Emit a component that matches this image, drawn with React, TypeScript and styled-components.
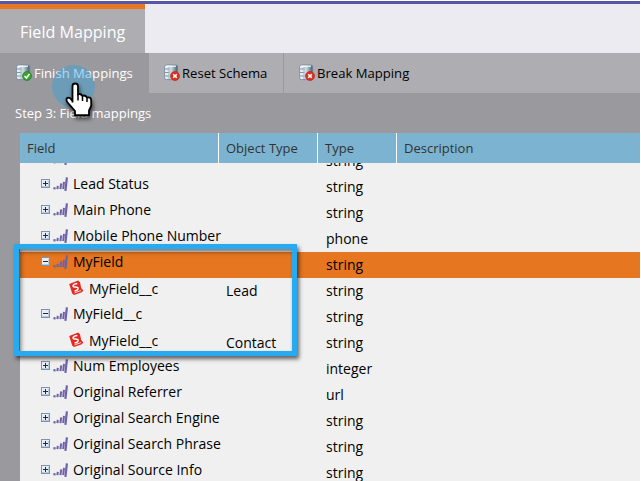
import React from "react";
import styled, { createGlobalStyle } from "styled-components";

const Global = createGlobalStyle`
  * { box-sizing: border-box; }
  body { margin: 0; background: #fff; font-family: "Open Sans", "Noto Sans", sans-serif; }
`;

const Page = styled.div`
  position: relative;
  width: 640px;
  height: 481px;
  overflow: hidden;
  display: flex;
  flex-direction: column;
  background: #9a999d;
`;

const Header = styled.header`
  display: flex;
  flex: none;
  height: 53px;
  border-top: 1px solid #fff;
  background: linear-gradient(#5856a6 3px, #ecebf1 3px);
  padding-top: 3px;
`;

const Tab = styled.div`
  width: 145px;
  height: 49px;
  border-top: 5px solid #e87722;
  background: #aeadb2;
  color: #fff;
  padding-left: 20px;
  font-size: 16.1px;
  line-height: 46px;
  white-space: nowrap;
`;

const Toolbar = styled.nav`
  display: flex;
  flex: none;
  height: 40px;
  background: #aeadb2;
`;

const ToolButton = styled.div<{ $width: number; $active?: boolean }>`
  display: flex;
  align-items: center;
  gap: 2px;
  width: ${(p) => p.$width}px;
  padding: 0 0 0 ${(p) => (p.$active ? 16 : 15)}px;
  color: ${(p) => (p.$active ? "#fff" : "#000")};
  background: ${(p) => (p.$active ? "#9a999d" : "transparent")};
  border-right: ${(p) => (p.$active ? "0" : "1px solid #99989c")};
  font-size: 13.1px;
  line-height: 42px;
  white-space: nowrap;
  &:last-child { border-right: 0; }
`;

const Step = styled.div`
  flex: none;
  height: 40px;
  padding-left: 15px;
  color: #fff;
  font-size: 13px;
  line-height: 41px;
`;

const Table = styled.section`
  flex: 1;
  min-height: 0;
  margin-left: 20px;
  display: flex;
  flex-direction: column;
  background: #f0f0f0;
`;

const columns = "198px 99px 79px 1fr";

const HeadRow = styled.div`
  display: grid;
  grid-template-columns: ${columns};
  flex: none;
  height: 30px;
  background: #7bb3d0;
`;

const HeadCell = styled.div`
  padding-left: 7px;
  font-size: 13px;
  line-height: 31px;
  color: #333;
  border-left: 1px solid #fff;
  &:first-child { border-left: 0; }
`;

const Body = styled.div`
  flex: 1;
  min-height: 0;
  overflow: hidden;
`;

const Rows = styled.div`
  margin-top: -15px;
`;

const Row = styled.div<{ $selected?: boolean }>`
  display: grid;
  grid-template-columns: ${columns};
  height: 26px;
  background: ${(p) => (p.$selected ? "#e6761f" : "transparent")};
  font-size: 14px;
  color: #000;
`;

const FieldCell = styled.div<{ $child?: boolean }>`
  display: flex;
  align-items: flex-start;
  padding-left: ${(p) => (p.$child ? 49 : 21)}px;
  line-height: ${(p) => (p.$child ? 22 : 20)}px;
  white-space: nowrap;
`;

const Label = styled.span`
  margin-left: 5px;
`;

const Cell = styled.div`
  padding-left: 8px;
  line-height: 26px;
`;

const TypeCell = styled(Cell)`
  padding-left: 9px;
`;

const Highlight = styled.div`
  position: absolute;
  left: 14px;
  top: 244px;
  width: 283px;
  height: 112px;
  border: 5px solid #27aaf0;
  box-shadow: 2px 3px 4px rgba(0, 0, 0, 0.6), inset 2px 3px 4px rgba(0, 0, 0, 0.5);
`;

const Halo = styled.div`
  position: absolute;
  left: 52px;
  top: 65px;
  width: 43px;
  height: 43px;
  border-radius: 50%;
  background: rgba(40, 160, 225, 0.4);
`;

const Pointer = styled.svg`
  position: absolute;
  left: 60px;
  top: 78px;
  overflow: visible;
  filter: drop-shadow(1px 3px 2px rgba(0, 0, 0, 0.6));
`;

const BoxIcon = styled.svg`
  flex: none;
  margin-top: 5px;
`;

const BarsIcon = styled.svg`
  flex: none;
  margin: 2px 0 0 3px;
`;

const BadgeIcon = styled.svg`
  flex: none;
  margin-top: 2px;
`;

function Expander({ open }: { open?: boolean }) {
  return (
    <BoxIcon width="9" height="9" viewBox="0 0 9 9" shapeRendering="crispEdges">
      <rect x="0.5" y="0.5" width="8" height="8" fill="#e9eef5" stroke="#7894b5" />
      <path d="M1 7.5h7M7.5 2v6" stroke="#bccadb" />
      <path d={open ? "M2 4.5h5" : "M2 4.5h5M4.5 2v5"} stroke="#172c4a" />
    </BoxIcon>
  );
}

function Bars() {
  return (
    <BarsIcon width="15" height="16" viewBox="0 0 15 16">
      <g stroke="#6d61a7" strokeWidth="2">
        <path d="M.4 12.3h2.2" strokeWidth="2.2" />
        <path d="M4.4 13.2l.4-3.4" />
        <path d="M7.4 13.2l.8-5.8" />
        <path d="M10.2 13l.8-7.2" />
        <path d="M12.4 14.8l1.5-13.4" strokeWidth="2.2" />
      </g>
    </BarsIcon>
  );
}

function Badge() {
  return (
    <BadgeIcon width="15" height="16" viewBox="0 0 15 16">
      <path d="M.2 4L9.2.5 11 2.2 12.2 8 14.4 10.4 12.8 12.2 5 15 3.2 13.4z" fill="#e32a20" />
      <path d="M8.3 3.6Q3.6 4.2 4.1 6.3C4.6 8 8.4 5.9 9.1 8Q9.5 10.2 5.6 10.9" fill="none" stroke="#fff" strokeWidth="1.5" />
      <path d="M5.4 13l6.8-2.5" stroke="#f8d5d2" />
    </BadgeIcon>
  );
}

function Database({ ok }: { ok?: boolean }) {
  return (
    <svg width="16" height="18" viewBox="0 0 16 18">
      <defs>
        <linearGradient id="shell">
          <stop offset="0" stopColor="#f4f8fb" />
          <stop offset=".55" stopColor="#c3d0da" />
          <stop offset="1" stopColor="#3f586d" />
        </linearGradient>
      </defs>
      <path d="M.6 2.6Q.8 1 3 1h8.6q2 0 2.1 1.6v11q0 2-2 2H2.6q-2 0-2-2z" fill="url(#shell)" stroke="#6f8495" strokeWidth=".8" />
      <path d="M2 2.2h10" stroke="#f7fcff" strokeWidth="1.2" />
      <path d="M1 5h4.5M1 8.5h4.5M1 12h4.5" stroke="#7f97a9" />
      <path d="M5 3v12" stroke="#a9bbc9" />
      <circle cx="11" cy="12" r="4.5" fill={ok ? "#38a32c" : "#dc301f"} stroke={ok ? "#257e20" : "#b52c20"} strokeWidth=".7" />
      <path d={ok ? "M8.5 12l1.9 2 3.1-4" : "M9.2 10.2l3.6 3.6M12.8 10.2l-3.6 3.6"} fill="none" stroke="#fff" strokeWidth="1.6" />
    </svg>
  );
}

type Item = { label: string; type: string; object?: string; open?: boolean; selected?: boolean };

const items: Item[] = [
  { label: "Lead Source", type: "string" },
  { label: "Lead Status", type: "string" },
  { label: "Main Phone", type: "string" },
  { label: "Mobile Phone Number", type: "phone" },
  { label: "MyField", type: "string", open: true, selected: true },
  { label: "MyField__c", type: "string", object: "Lead" },
  { label: "MyField__c", type: "string", open: true },
  { label: "MyField__c", type: "string", object: "Contact" },
  { label: "Num Employees", type: "integer" },
  { label: "Original Referrer", type: "url" },
  { label: "Original Search Engine", type: "string" },
  { label: "Original Search Phrase", type: "string" },
  { label: "Original Source Info", type: "string" },
];

export default function App() {
  return (
    <>
      <Global />
      <Page>
        <Header><Tab>Field Mapping</Tab></Header>
        <Toolbar>
          <ToolButton $width={149} $active><Database ok />Finish Mappings</ToolButton>
          <ToolButton $width={135}><Database />Reset Schema</ToolButton>
          <ToolButton $width={356}><Database />Break Mapping</ToolButton>
        </Toolbar>
        <Step>Step 3: Field mappings</Step>
        <Table>
          <HeadRow>
            <HeadCell>Field</HeadCell>
            <HeadCell>Object Type</HeadCell>
            <HeadCell>Type</HeadCell>
            <HeadCell>Description</HeadCell>
          </HeadRow>
          <Body>
            <Rows>
              {items.map((item, i) => {
                const child = Boolean(item.object);
                return (
                  <Row key={i} $selected={item.selected}>
                    <FieldCell $child={child}>
                      {child ? <Badge /> : <><Expander open={item.open} /><Bars /></>}
                      <Label>{item.label}</Label>
                    </FieldCell>
                    <Cell>{item.object}</Cell>
                    <TypeCell>{item.type}</TypeCell>
                  </Row>
                );
              })}
            </Rows>
          </Body>
        </Table>
        <Halo />
        <Highlight />
        <Pointer width="34" height="40" viewBox="0 0 34 40">
          <path
            d="M12.5 24.5V8Q12.5 5.5 15.2 5.5T18 8V16.5Q20.5 15 22.5 18 25 16.5 27 19.5 31 18.5 31.2 22.5V28L29 32.5V37.2H15V33L7.2 24Q5.6 21 7.5 19.8 9.8 18.8 12.5 23"
            fill="#fff" stroke="#000" strokeWidth="1.8" strokeLinejoin="round"
          />
          <path d="M18 16v6.5M22.5 18v5M27 19.5v4.5" fill="none" stroke="#000" strokeWidth="1.5" />
        </Pointer>
      </Page>
    </>
  );
}
